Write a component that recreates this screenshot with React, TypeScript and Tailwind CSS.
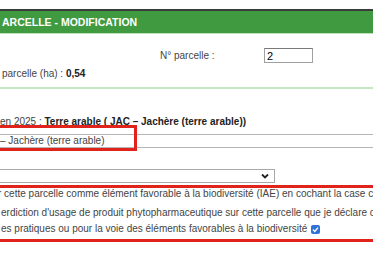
import React from 'react';

export default function App() {
  return (
    <div className="relative w-[373px] h-[257px] overflow-hidden bg-white text-[10px] leading-[12px] text-[#444] font-['Liberation_Sans',Arial,sans-serif]">
      <div className="h-[9px]" />
      <div className="h-[2px] bg-[#3b3b3b]" />
      <div className="h-[22px] bg-[#409a3f] flex items-center pl-[2px]">
        <span className="text-white font-bold text-[10.5px] whitespace-nowrap">ARCELLE - MODIFICATION</span>
      </div>
      <div className="h-[1px] bg-[#bfe0bc]" />

      {/* parcel number */}
      <div className="mt-[14px] flex items-center h-[15px]">
        <span className="ml-[160px] w-[104px]">N° parcelle :</span>
        <div className="w-[49px] h-[15px] border border-[#a0a0a0] border-t-[#7a7a7a] flex items-center pl-[2px] text-[11px] text-black">2</div>
      </div>

      <div className="mt-[5px] h-[12px] pl-[2px] whitespace-nowrap">
        parcelle (ha) : <span className="font-bold text-[#222]">0,54</span>
      </div>

      <div className="mt-[7px] h-[2px] bg-[#c6e5c3]" />

      <div className="mt-[27px] h-[12px] whitespace-nowrap">
        en 2025 : <span className="font-bold text-[#222]">Terre arable ( JAC – Jachère (terre arable))</span>
      </div>

      <div className="mt-[6px] h-[14px] border-y border-[#b5b5b5] flex items-center whitespace-nowrap">
        – Jachère (terre arable)
      </div>

      <div className="mt-[21px] -ml-[2px] w-[277px] h-[14px] border border-[#a8a8a8] flex items-center justify-end pr-[5px]">
        <svg width="8" height="6" viewBox="0 0 8 6">
          <polyline points="1,1.5 4,4.5 7,1.5" fill="none" stroke="#222" strokeWidth="1.8" />
        </svg>
      </div>

      <div className="mt-[2px] border-y-[3px] border-[#e0241c] pb-[4px] whitespace-nowrap">
        <div className="h-[12px] overflow-hidden -ml-[2px]">r cette parcelle comme élément favorable à la biodiversité (IAE) en cochant la case ci-dessous</div>
        <div className="mt-[7px] h-[12px] overflow-hidden pl-[1px]">erdiction d'usage de produit phytopharmaceutique sur cette parcelle que je déclare comme</div>
        <div className="mt-[4px] h-[12px] pl-[1px] flex items-center gap-[4px]">
          <span>es pratiques ou pour la voie des éléments favorables à la biodiversité</span>
          <span className="w-[9px] h-[9px] rounded-[2px] bg-[#2f72d8] flex items-center justify-center">
            <svg width="7" height="7" viewBox="0 0 7 7">
              <polyline points="1,3.6 2.8,5.4 6,1.6" fill="none" stroke="white" strokeWidth="1.4" />
            </svg>
          </span>
        </div>
      </div>

      {/* red annotation around the current culture */}
      <div className="absolute left-[-3px] top-[125px] w-[140px] h-[26px] border-[3px] border-[#e0241c]" />
    </div>
  );
}
